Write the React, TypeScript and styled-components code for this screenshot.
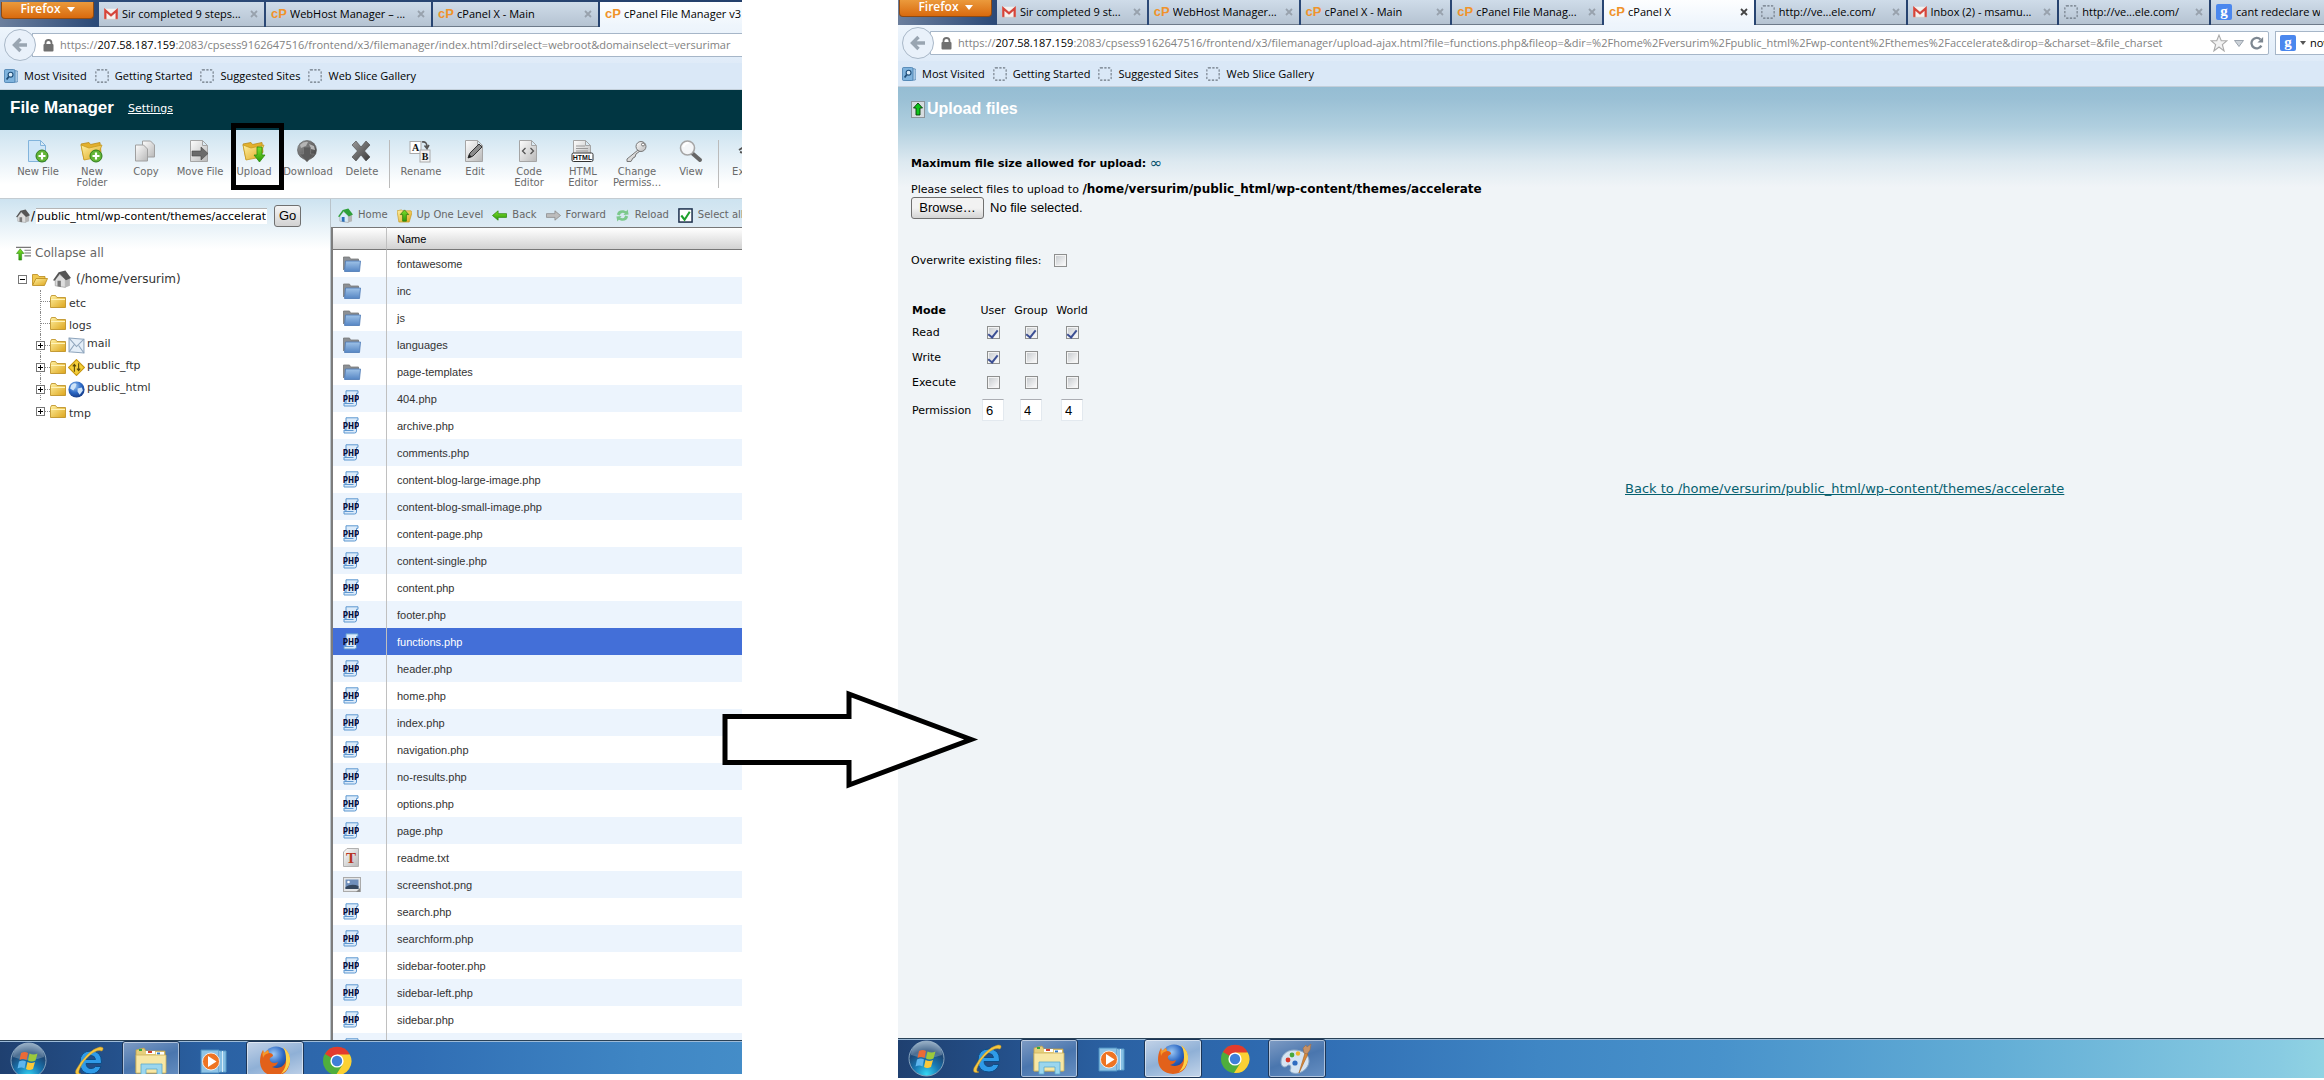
import React, { useRef } from "react";
import styled, { createGlobalStyle, css } from "styled-components";

const ui = `"Open Sans", "Noto Sans", sans-serif`;
const verdana = `"DejaVu Sans", sans-serif`;
const arial = `"Liberation Sans", sans-serif`;

const Global = createGlobalStyle`
  * { box-sizing: border-box; }
  body { margin: 0; background: #fff; font-family: ${verdana}; font-size: 11px; color: #000; }
  button, input { font: inherit; color: inherit; margin: 0; }
  svg { display: block; flex: none; }
`;

/* ---------- page ---------- */

const Page = styled.div`
  position: relative;
  display: grid;
  grid-template-columns: minmax(0, 742fr) minmax(0, 1426fr);
  column-gap: 156px;
  height: 100vh;
  overflow: hidden;
`;

const Window = styled.section<{ $bottom: number }>`
  display: flex;
  flex-direction: column;
  min-width: 0;
  min-height: 0;
  overflow: hidden;
  margin-bottom: ${(p) => p.$bottom}px;
`;

/* ---------- browser chrome ---------- */

const TabStrip = styled.div<{ $top: number }>`
  display: flex;
  flex: none;
  gap: 2px;
  padding-top: ${(p) => p.$top}px;
  background: linear-gradient(90deg, #6c7f9d 0, #2c4a78 96px, #24406c 100%);
`;

const FirefoxButton = styled.button`
  display: flex;
  align-items: center;
  justify-content: center;
  gap: 6px;
  flex: none;
  width: 93px;
  height: 17px;
  margin: 0 3px 8px 1px;
  padding: 0 0 2px;
  border: 1px solid #8f4a12;
  border-top: 0;
  border-radius: 0 0 4px 4px;
  background: linear-gradient(#eb9a3c, #d96a0e);
  color: #fff;
  font: 600 12px/14px ${ui};
`;

const Tab = styled.div<{ $active?: boolean; $size: "fixed" | "even" | "last" }>`
  display: flex;
  align-items: center;
  gap: 4px;
  height: 25px;
  padding: 0 4px 0 5px;
  overflow: hidden;
  font: 11px/16px ${ui};
  white-space: nowrap;
  border-bottom: 1px solid ${(p) => (p.$active ? "#eef5fc" : "#6d7a8a")};
  background: ${(p) => (p.$active ? "linear-gradient(#fdfeff, #eef5fc)" : "linear-gradient(#cfdce9, #b5c3d2)")};
  ${(p) => p.$size === "fixed" && css`flex: 0 0 165px;`}
  ${(p) => p.$size === "even" && css`flex: 1 1 0; min-width: 0;`}
  ${(p) => p.$size === "last" && css`flex: 0 0 113px;`}
`;

const TabTitle = styled.span`
  flex: 1;
  min-width: 0;
  overflow: hidden;
`;

const CloseTab = styled.button<{ $active?: boolean }>`
  flex: none;
  width: 12px;
  height: 12px;
  padding: 2px;
  border: 0;
  background: none;
  color: ${(p) => (p.$active ? "#444" : "#98a2ad")};
`;

const CpMark = styled.b`
  flex: none;
  width: 15px;
  color: #f0932b;
  font: 700 13px/16px ${arial};
`;

const NavBar = styled.div`
  display: flex;
  align-items: center;
  flex: none;
  height: 36px;
  padding: 0 0 0 4px;
  background: linear-gradient(#eef5fc, #dfebf8);
`;

const BackButton = styled.button`
  position: relative;
  flex: none;
  width: 32px;
  height: 32px;
  padding: 7px;
  border: 1px solid #a9b8c8;
  border-radius: 50%;
  background: #e9f1fa;
`;

const UrlBar = styled.div<{ $closed?: boolean }>`
  display: flex;
  align-items: center;
  flex: 1;
  min-width: 0;
  gap: 6px;
  height: 24px;
  margin-left: -4px;
  padding: 0 ${(p) => (p.$closed ? 4 : 0)}px 0 10px;
  border: 1px solid #a6b6c8;
  ${(p) => (p.$closed ? "border-radius: 0 2px 2px 0;" : "border-right: 0;")}
  background: #fff;
`;

const Url = styled.div`
  flex: 1;
  min-width: 0;
  overflow: hidden;
  color: #828282;
  font: 11px/18px ${ui};
  white-space: nowrap;
  b { color: #000; font-weight: 400; }
`;

const SearchBox = styled.div`
  display: flex;
  align-items: center;
  flex: none;
  gap: 4px;
  width: 49px;
  height: 24px;
  margin-left: 6px;
  padding-left: 4px;
  border: 1px solid #a6b6c8;
  border-right: 0;
  background: #fff;
  input {
    width: 16px;
    padding: 0;
    border: 0;
    outline: 0;
    background: none;
    font: 11px/18px ${ui};
  }
`;

const Bookmarks = styled.nav<{ $height: number }>`
  display: flex;
  align-items: center;
  gap: 8px;
  flex: none;
  height: ${(p) => p.$height}px;
  padding-left: 4px;
  border-bottom: 1px solid #c3cfda;
  background: #dae8f7;
  a {
    display: flex;
    align-items: center;
    gap: 6px;
    color: #000;
    text-decoration: none;
    font: 11px/16px ${ui};
    white-space: nowrap;
  }
`;

/* ---------- file manager ---------- */

const ManagerHeader = styled.header`
  display: flex;
  align-items: center;
  flex: none;
  gap: 14px;
  height: 40px;
  padding: 0 10px 4px;
  background: #013642;
  h1 { margin: 0; color: #fff; font: 700 17px/20px ${arial}; }
  a { color: #fff; font-size: 11px; }
`;

const Toolbar = styled.div`
  display: flex;
  flex: none;
  height: 68px;
  padding: 10px 0 0 11px;
  background: linear-gradient(#cde3f0, #fff 80%);
`;

const Divider = styled.span`
  flex: none;
  width: 1px;
  height: 48px;
  background: #bbb;
  &:not(:last-child) { margin-right: 4px; }
`;

const Tool = styled.button`
  position: relative;
  display: flex;
  flex-direction: column;
  align-items: center;
  flex: 0 0 54px;
  width: 54px;
  padding: 0;
  border: 0;
  background: none;
  color: #6a6a6a;
  font: 10px/11px ${verdana};
  svg { margin-bottom: 2px; }
`;

const Marker = styled.span`
  position: absolute;
  top: -17px;
  left: 4px;
  width: 53px;
  height: 67px;
  border: 5px solid #000;
`;

const Body = styled.div`
  display: grid;
  grid-template-columns: 330px minmax(0, 1fr);
  flex: 1;
  min-height: 0;
  border-top: 1px solid #c4ccd2;
  background: linear-gradient(#cde3f0, #fff 50px);
`;

const Side = styled.aside`
  min-width: 0;
`;

const PathForm = styled.form`
  display: flex;
  align-items: center;
  height: 34px;
  padding-left: 16px;
  label { display: flex; align-items: center; gap: 1px; font-size: 12px; }
  input {
    width: 231px;
    height: 16px;
    padding: 0 1px;
    border: 0;
    border-top: 1px solid #b5b5b5;
    background: #fff;
    font: 11px/14px ${verdana};
  }
  button {
    width: 27px;
    height: 22px;
    margin-left: 7px;
    padding: 0;
    border: 1px solid #707070;
    border-radius: 3px;
    background: linear-gradient(#f4f4f4, #d2d2d2);
    font: 13px/16px ${arial};
  }
`;

const CollapseAll = styled.button`
  display: flex;
  align-items: center;
  gap: 4px;
  margin: 12px 0 8px 16px;
  padding: 0;
  height: 16px;
  border: 0;
  background: none;
  color: #666;
  font-size: 12px;
`;

const TreeRoot = styled.div`
  display: flex;
  align-items: center;
  gap: 5px;
  height: 20px;
  padding-left: 18px;
  color: #333;
  font-size: 12px;
`;

const Branch = styled.ul`
  margin: 0 0 0 40px;
  padding: 1px 0 0;
  list-style: none;
`;

const Leaf = styled.li`
  display: flex;
  align-items: center;
  height: 22px;
  border-left: 1px dotted #888;
  &:last-child { border-color: transparent; }
`;

const Stub = styled.span`
  width: 9px;
  border-top: 1px dotted #888;
`;

const ExpandBox = styled.button`
  flex: none;
  width: 9px;
  height: 9px;
  padding: 0;
  border: 1px solid #777;
  background: #fff;
  svg { width: 7px; height: 7px; }
  ${Leaf} & { margin: 0 0 0 -5px; }
  ${Leaf} & + ${Stub} { width: 5px; }
`;

const LeafName = styled.span<{ $badge?: boolean }>`
  display: flex;
  align-items: center;
  color: #333;
  ${(p) => (p.$badge ? "padding: 0 0 4px 2px;" : "padding: 4px 0 0 3px;")}
`;

const BadgeSlot = styled.span`
  margin-left: 2px;
`;

const Listing = styled.div`
  display: flex;
  flex-direction: column;
  min-width: 0;
  min-height: 0;
  overflow: hidden;
  border-left: 1px solid #b9c3ca;
`;

const Actions = styled.div`
  display: flex;
  align-items: center;
  flex: none;
  gap: 9px;
  height: 28px;
  padding: 4px 0 0 7px;
  background: linear-gradient(#cde3f0, #deebf4);
  button, label {
    display: flex;
    align-items: center;
    gap: 5px;
    flex: none;
    padding: 0;
    border: 0;
    background: none;
    color: #666;
    font: 10px/14px ${verdana};
    white-space: nowrap;
  }
`;

const TableClip = styled.div`
  flex: 1;
  min-height: 0;
  overflow: hidden;
  border-left: 2px solid #7d7d7d;
  background: #fff;
`;

const Files = styled.table`
  width: 100%;
  border-collapse: separate;
  border-spacing: 0;
  table-layout: fixed;
  font: 11px/14px ${arial};
  color: #333;
  th {
    height: 23px;
    padding: 0 0 0 10px;
    border-top: 1px solid #777;
    border-bottom: 1px solid #777;
    background: linear-gradient(#fff, #d2d2d2);
    color: #000;
    font-weight: 400;
    text-align: left;
  }
  th:first-child, td:first-child { width: 54px; border-right: 1px solid #c0c0c0; }
  td { height: 27px; padding: 0 0 0 10px; }
`;

const FileRow = styled.tr<{ $selected?: boolean }>`
  &:nth-child(even) { background: #ecf4fd; }
  ${(p) => p.$selected && css`&&, &&:nth-child(even) { background: #436fd8; color: #fff; }`}
`;

/* ---------- upload page ---------- */

const UploadPage = styled.main`
  flex: 1;
  min-height: 0;
  padding: 13px;
  background: linear-gradient(#95bdd3 0, #9ac0d5 12px, #b0cfdf 40px, #dde9f0 75px, #f0f4f7 100px);
`;

const UploadTitle = styled.h1`
  display: flex;
  align-items: center;
  gap: 2px;
  height: 18px;
  margin: 0 0 37px;
  color: #fff;
  font: 700 16px/18px ${arial};
`;

const Line = styled.p`
  margin: 0 0 10px;
  height: 16px;
  line-height: 16px;
`;

const Limit = styled.a`
  color: #05506c;
  font-size: 15px;
  line-height: 16px;
  text-decoration: none;
  vertical-align: -1px;
`;

const TargetPath = styled.b`
  font-size: 12px;
`;

const PickRow = styled.div`
  display: flex;
  align-items: center;
  gap: 6px;
  margin-top: -10px;
  font: 13px/16px ${arial};
  input { display: none; }
  button {
    width: 73px;
    height: 22px;
    padding: 0;
    border: 1px solid #707070;
    border-radius: 3px;
    background: linear-gradient(#f2f2f2 50%, #d4d4d4);
  }
`;

const OverwriteRow = styled.div`
  display: flex;
  align-items: center;
  gap: 12px;
  height: 16px;
  margin: 33px 0 32px;
`;

const Check = styled.input.attrs({ type: "checkbox" })`
  appearance: none;
  display: inline-grid;
  place-items: center;
  width: 13px;
  height: 13px;
  margin: 0;
  border: 1px solid #8e8f8f;
  background: linear-gradient(135deg, #c4c8cc, #fff);
  box-shadow: inset 0 0 0 1px #f4f4f4;
  vertical-align: middle;
  &:checked::before {
    content: "";
    width: 4px;
    height: 8px;
    border: solid #3c4f94;
    border-width: 0 2px 2px 0;
    transform: rotate(38deg);
  }
`;

const Modes = styled.table`
  border-collapse: collapse;
  th, td { height: 25px; padding: 0; font-weight: 400; text-align: center; }
  th { height: 20px; }
  tr > :first-child { width: 66px; padding-left: 1px; text-align: left; }
  thead th:first-child { font-weight: 700; }
  tr > :nth-child(2) { width: 32px; }
  tr > :nth-child(3) { width: 44px; }
  tr > :nth-child(4) { width: 38px; }
  tbody tr:last-child td, tbody tr:last-child th { height: 30px; }
`;

const Digit = styled.input`
  width: 22px;
  height: 22px;
  padding: 0 3px;
  border: 1px solid #e3e9ef;
  border-top-color: #abadb3;
  background: #fff;
  font: 13px/16px ${arial};
`;

const BackLink = styled.a`
  display: block;
  margin: 55px 0 0 51%;
  color: #06606f;
  font-size: 13px;
  line-height: 18px;
  white-space: nowrap;
`;

/* ---------- taskbar ---------- */

const Taskbar = styled.footer<{ $height: number }>`
  display: flex;
  flex: none;
  gap: 4px;
  height: ${(p) => p.$height}px;
  overflow: hidden;
  border-top: 1px solid #2a4258;
  box-shadow: inset 0 1px 0 #9dbbd8;
  background: linear-gradient(90deg, #1f4070 0, #24508a 110px, #2b62a4 220px, #2f6cb3 400px, #3f86c4 640px, #4892cb 820px, #63aed6 1100px, #88cbe2 1380px, #90d3e3 1426px);
`;

const TaskButton = styled.button<{ $state?: "open" | "active"; $start?: boolean }>`
  display: flex;
  align-items: center;
  justify-content: center;
  flex: none;
  width: ${(p) => (p.$start ? 56 : 58)}px;
  height: 39px;
  padding: 0;
  border: 1px solid transparent;
  background: none;
  ${(p) => p.$state && css`
    border-color: #1c3658;
    border-radius: 3px;
    box-shadow: inset 0 0 0 1px rgba(255, 255, 255, 0.5);
    background: ${p.$state === "active"
      ? "linear-gradient(160deg, #c3d3e8, #8fb0d6 50%, #c4d5ea)"
      : "linear-gradient(160deg, #7f9cc4, #4a76ae 50%, #6790c2)"};
  `}
`;

/* ---------- annotation ---------- */

const ArrowLayer = styled.svg`
  position: absolute;
  top: 688px;
  left: calc(31% + 1px);
  pointer-events: none;
`;

/* ---------- drawings ---------- */

const Svg = ({ s = 16, w, h, vb = "0 0 16 16", children }: { s?: number; w?: number; h?: number; vb?: string; children: React.ReactNode }) => (
  <svg width={w ?? s} height={h ?? s} viewBox={vb} fill="none" aria-hidden="true">{children}</svg>
);

const HiddenSvg = styled.svg`
  position: absolute;
`;

const Defs = () => (
  <HiddenSvg width="0" height="0" aria-hidden="true">
    <defs>
      <linearGradient id="gold" x1="0" y1="0" x2="1" y2="1"><stop stopColor="#fff0a0" /><stop offset="1" stopColor="#dda51c" /></linearGradient>
      <linearGradient id="grey" x1="0" y1="0" x2="1" y2="1"><stop stopColor="#fdfdfd" /><stop offset="1" stopColor="#b8b8b8" /></linearGradient>
      <linearGradient id="iron" x1="0" y1="0" x2="1" y2="1"><stop stopColor="#9a9a9a" /><stop offset="1" stopColor="#3a3a3a" /></linearGradient>
      <linearGradient id="green" x1="0" y1="0" x2="0" y2="1"><stop stopColor="#7fe02a" /><stop offset="1" stopColor="#2b9a0c" /></linearGradient>
      <linearGradient id="sky" x1="0" y1="0" x2="0" y2="1"><stop stopColor="#9fc3e8" /><stop offset="1" stopColor="#5686c4" /></linearGradient>
      <radialGradient id="ball" cx=".4" cy=".3" r=".8"><stop stopColor="#9cc8f4" /><stop offset=".5" stopColor="#2c68c4" /><stop offset="1" stopColor="#0e2f78" /></radialGradient>
      <radialGradient id="orb" cx=".5" cy=".95" r=".9"><stop stopColor="#35d8f4" /><stop offset=".4" stopColor="#1879b4" /><stop offset=".75" stopColor="#1c4674" /><stop offset="1" stopColor="#6f8fae" /></radialGradient>
    </defs>
  </HiddenSvg>
);

const Gmail = () => (
  <Svg s={14}><rect x="0" y="2" width="16" height="12" fill="#f4f1ee" /><path d="M1.500 14V4L8 9.500 14.500 4v10" stroke="#d5453a" strokeWidth="2.600" /><path d="M0 14h16" stroke="#c9c2bc" strokeWidth=".6" /></Svg>
);
const Dotted = () => (
  <Svg s={14}><rect x="1" y="1" width="14" height="14" rx="2" stroke="#6b7580" strokeWidth="1.200" strokeDasharray="2.600 1.600" /></Svg>
);
const Google = () => (
  <Svg s={16}><rect width="16" height="16" rx="2" fill="#4a87ee" /><text x="8" y="11.500" fontSize="15" fontWeight="700" textAnchor="middle" fill="#fff" fontFamily="Liberation Serif">g</text></Svg>
);
const Cross = () => <Svg s={8} vb="0 0 8 8"><path d="M1 1l6 6M7 1L1 7" stroke="currentColor" strokeWidth="1.800" /></Svg>;
const BackArrow = () => <Svg s={16}><path d="M15 8H3M8.500 2L2.500 8l6 6" stroke="#99a5b1" strokeWidth="3.400" /></Svg>;
const Lock = () => <Svg w={11} h={13} vb="0 0 11 13"><rect x=".5" y="5" width="10" height="7.500" rx="1" fill="#707070" /><path d="M2.500 6V4a3 3 0 016 0v2" stroke="#707070" strokeWidth="1.800" /></Svg>;
const MostVisited = () => (
  <Svg s={14}><rect x="3" y="2" width="13" height="13" rx="2" fill="#a8c8e4" stroke="#5b8db8" /><rect x=".5" y=".5" width="12" height="15" rx="1.500" fill="#7fb3dd" stroke="#4a80b0" /><circle cx="7.500" cy="6.500" r="2.800" fill="#d9ecfa" stroke="#1e4d78" strokeWidth="1.300" /><path d="M5.500 8.500L3 12" stroke="#1e4d78" strokeWidth="2" /></Svg>
);

const Sheet = ({ fill = "url(#grey)", stroke = "#a5a5a5" }: { fill?: string; stroke?: string }) => (
  <path d="M2.500 .5h12l5 5v16h-17z M14.500 .5v5h5" fill={fill} stroke={stroke} />
);
const FolderBig = () => (
  <g><path d="M1 4l8-1.500 1.500 2L20 2.500l1 10-17 7z" fill="#e3b02c" stroke="#b98a1a" strokeWidth=".8" /><path d="M1 5l3 15 13-2.500L22 5 9 8z" fill="url(#gold)" stroke="#c79a22" strokeWidth=".8" /></g>
);
const Plus = () => <g><circle cx="16" cy="16" r="6" fill="#62b436" stroke="#2f7d1c" /><path d="M16 12.500v7M12.500 16h7" stroke="#fff" strokeWidth="2.200" /></g>;

const toolArt: Record<string, React.ReactNode> = {
  "New File": <><Sheet fill="#cfe6f8" stroke="#82b4dc" /><Plus /></>,
  "New Folder": <><FolderBig /><Plus /></>,
  Copy: <><path d="M8.500 1h8l4 4v12h-12z" fill="url(#grey)" stroke="#a0a0a0" /><path d="M1.500 5h8l4 4v12h-12z" fill="url(#grey)" stroke="#a0a0a0" /></>,
  "Move File": <><Sheet /><path d="M4 11h9V7l7 6.500-7 6.500v-4H4z" fill="#6a6a6a" stroke="#444" strokeWidth=".6" /></>,
  Upload: <><FolderBig /><path d="M15 7h5v8h3l-5.500 7L12 15h3z" fill="url(#green)" stroke="#2c8a10" strokeWidth=".8" /></>,
  Download: <><circle cx="11" cy="10" r="9.500" fill="url(#iron)" stroke="#555" strokeWidth=".6" /><path d="M4 5q4-4 8-3l-2 4-5 2zM13 4l5 2 1 4-4-1z" fill="#b5b5b5" /><path d="M7.500 7h7v7h4L11 22l-7.500-8h4z" fill="#5c5c5c" stroke="#8a8a8a" strokeWidth=".5" /></>,
  Delete: <path d="M2 5l4-4 5 6 5-6 4 4-5.500 6 5.500 6-4 4-5-6-5 6-4-4 5.500-6z" fill="url(#iron)" stroke="#444" strokeWidth=".6" />,
  Rename: <><rect x="1" y="1.500" width="11" height="12" fill="#fff" stroke="#aaa" /><rect x="11" y="10" width="10" height="12" fill="#f2f2f2" stroke="#aaa" /><text x="6.500" y="11" fontSize="10" fontWeight="700" textAnchor="middle" fill="#111" fontFamily="Liberation Serif">A</text><text x="16" y="20" fontSize="10" fontWeight="700" textAnchor="middle" fill="#111" fontFamily="Liberation Serif">B</text><path d="M13 2q5-1 5 5M15.500 5.500l2.500 3 2-3.500" stroke="#555" strokeWidth="1.600" /></>,
  Edit: <><Sheet /><path d="M5 18l2-5 9-9 3 3-9 9z" fill="#8b8b8b" stroke="#333" /><path d="M5 18l4-1-3-3z" fill="#222" /></>,
  "Code Editor": <><Sheet /><path d="M8.500 8L5.500 11l3 3M13.500 8l3 3-3 3" stroke="#555" strokeWidth="1.300" /></>,
  "HTML Editor": <><Sheet /><path d="M5 6h9M5 8.500h12M5 11h12" stroke="#999" /><rect x="1" y="13" width="21" height="8.500" rx="1.500" fill="#fff" stroke="#333" /><text x="11.500" y="20" fontSize="7" fontWeight="700" textAnchor="middle" fill="#111" fontFamily="Liberation Sans">HTML</text></>,
  "Change Permiss...": <><path d="M13 10L2 19v2.500h4L8 18l2-1 1-3 4-3z" fill="url(#grey)" stroke="#777" /><circle cx="16" cy="6.500" r="5" fill="url(#grey)" stroke="#777" /><circle cx="18" cy="4.500" r="1.500" fill="#fff" stroke="#777" /></>,
  View: <><path d="M13 13l8 7" stroke="#666" strokeWidth="4" strokeLinecap="round" /><circle cx="8.500" cy="8" r="7" fill="#f4f6f8" stroke="#a5a5a5" strokeWidth="1.600" /><path d="M4.500 7q1-4 5-4" stroke="#fff" strokeWidth="2" /></>,
  Extract: <path d="M6 7l-5 3M6 13l-4-1" stroke="#555" strokeWidth="2" />,
};

const Folder = () => (
  <Svg w={16} h={13} vb="0 0 16 13"><path d="M.5 2.500l1-2h4l1.500 2h8.500v10H.5z" fill="url(#gold)" stroke="#b98a1a" strokeWidth=".8" /><path d="M1 4.500h14" stroke="#fff3b8" /></Svg>
);
const FolderOpen = () => (
  <Svg w={16} h={13} vb="0 0 16 13"><path d="M.5 12V1.500h5l1.500 2h6V6" fill="#f0c850" stroke="#b98a1a" strokeWidth=".8" /><path d="M.5 12.500L4 5.500h11.500l-3 7z" fill="url(#gold)" stroke="#b98a1a" strokeWidth=".8" /></Svg>
);
const House = ({ s = 16, roof = "#555", wall = "#ddd", door = "#777" }) => (
  <Svg s={s}><path d="M2 8l4-4 5 4v7.500L2 14z" fill={wall} stroke="#999" strokeWidth=".6" /><path d="M11 8l4-1v7l-4 1.500z" fill="#b5b5b5" /><path d="M0 9l5-7 6-1.500L16 7l-4.500 2L6 3.500 1.500 9.500z" fill={roof} /><path d="M4 9.500h3V15l-3-.5z" fill={door} /></Svg>
);
const BlueFolder = () => (
  <Svg w={18} h={16} vb="0 0 18 16"><path d="M.5 14V1h6l1 2h8v4" fill="#8b8f94" stroke="#777" strokeWidth=".8" /><path d="M1.500 15.500L2.500 5h15l-1 10.500z" fill="url(#sky)" stroke="#4a77b4" strokeWidth=".8" /></Svg>
);
const Php = () => (
  <Svg w={16} h={17} vb="0 0 16 17"><path d="M3 .8h12v2.500h-1.500V14q0 2-2 2H1v-3h2z" fill="#dcebfa" stroke="#5d97d0" /><path d="M1.500 13.500h9" stroke="#5d97d0" /><text x="8" y="11.500" fontSize="8" fontWeight="700" textAnchor="middle" fill="#070f3c" fontFamily="DejaVu Sans Condensed, Liberation Sans">PHP</text></Svg>
);
const Txt = () => (
  <Svg w={16} h={19} vb="0 0 16 19"><path d="M4 .5h11.500v18H.5V4z" fill="url(#grey)" stroke="#b0b0b0" /><text x="8" y="15" fontSize="15" fontWeight="700" textAnchor="middle" fill="#b8331f" fontFamily="Liberation Serif">T</text></Svg>
);
const Png = () => (
  <Svg w={18} h={16} vb="0 0 18 16"><rect x=".5" y=".5" width="17" height="14" fill="#e4e6e8" stroke="#aaa" /><rect x="2.500" y="2.500" width="13" height="9.500" fill="#6f8fbc" /><path d="M2.500 10q6-4 13-1v3h-13z" fill="#34475f" /><circle cx="5.500" cy="5" r="1.300" fill="#fff" /><path d="M13 15l4-4v4z" fill="#888" /></Svg>
);
const Arrow = ({ flip, fill = "url(#green)", stroke = "#2f8a12" }: { flip?: boolean; fill?: string; stroke?: string }) => (
  <Svg s={15}><path d={flip ? "M15.500 8l-6-5v3H.5v4h9v3z" : "M.5 8l6-5v3h9v4h-9v3z"} fill={fill} stroke={stroke} strokeWidth=".8" /></Svg>
);
const Tick = () => <Svg s={15}><rect x="1" y="1" width="14" height="14" fill="#fff" stroke="#1c2f4c" strokeWidth="1.600" /><path d="M3.500 8l3.500 4.500L12.500 4" stroke="#1da02c" strokeWidth="2.200" /></Svg>;
const Reload = () => <Svg s={15}><path d="M2 7q1-5 7-4.500l3 1 1.500-2 1 5.500-5.500.5 1.500-2Q6 4 5 8zM14 9q-1 5-7 4.500l-3-1-1.500 2-1-5.500 5.500-.5-1.500 2Q10 12 11 8z" fill="#7cc98c" /></Svg>;
const UpLevel = () => <Svg s={15}><path d="M0 3l5-1 1 1h9l1 2-3 10H2z" fill="url(#gold)" stroke="#c79a22" strokeWidth=".7" /><path d="M8 2l4.500 5H10v7H6V7H3.500z" fill="url(#green)" stroke="#2b7a0c" strokeWidth=".8" /></Svg>;
const CollapseIcon = () => <Svg s={15}><path d="M4.500 3l4 5H6v7H3V8H.5z" fill="url(#green)" stroke="#2b8a0c" strokeWidth=".6" /><path d="M0 1.500h16M9 4.500h7M9 7.500h7M9 10.500h7" stroke="#777" strokeWidth="1.200" /></Svg>;
const Sign = ({ plus }: { plus?: boolean }) => <Svg s={7} vb="0 0 7 7"><path d={plus ? "M1 3.500h5M3.500 1v5" : "M1 3.500h5"} stroke="#000" /></Svg>;

const badges: Record<string, React.ReactNode> = {
  mail: <Svg s={17}><path d="M1 1l14 1v13L1 14z" fill="#e4eef8" stroke="#8fa5bc" /><path d="M1 1l7 8 7-7M1 14l5-7M15 15l-5-7" stroke="#8fa5bc" /></Svg>,
  public_ftp: <Svg s={17}><path d="M8 .5L15.500 8 8 15.500.5 8z" fill="#f5cf3a" stroke="#c79612" /><path d="M6 12V5M4.500 7L6 5l1.500 2M10 4v7M8.500 9l1.500 2 1.500-2" stroke="#5a4708" strokeWidth="1" /></Svg>,
  public_html: <Svg s={17}><circle cx="8" cy="8" r="7.600" fill="url(#ball)" /><path d="M3 4q3-3 5-1L7 6 5 9 2 7zM9 7l4-1 1 3-3 4-2-3z" fill="#cfe4f8" /></Svg>,
};

const Windows = () => (
  <Svg s={37} vb="0 0 37 37"><circle cx="18.500" cy="18.500" r="17.500" fill="url(#orb)" stroke="#86a3bd" /><path d="M3 15a15.500 14 0 0131 0q-15 6-31 0z" fill="#fff" opacity=".22" /><path d="M11 11q4-2 7 0l-1.500 7q-3-2-7 0z" fill="#ec6a36" /><path d="M19.500 11.500q4 2 8 0l-2 7q-4 2-7.500 0z" fill="#9cc93c" /><path d="M9 19.500q4-2 7 0l-1.500 7q-3-2-7 0z" fill="#5fb6ee" /><path d="M17.500 20q4 2 7.500 0l-2 7q-4 2-7 0z" fill="#fbc93a" /></Svg>
);
const Explorer = () => (
  <Svg s={32} vb="0 0 32 32"><path d="M1 5l8-2 2 3h19v22H1z" fill="#e6cf7c" stroke="#bfa04a" strokeWidth=".8" /><path d="M11 6h9v3h-9zM21 7h8v3h-8z" fill="#fff" /><path d="M4 4h3v2H4z" fill="#35a83a" /><path d="M13 6h4v2h-4z" fill="#d2402c" /><path d="M22 7.500h3v2h-3z" fill="#2f7ac8" /><path d="M1 10h30v18H1z" fill="#f7e7a5" stroke="#cdb25c" strokeWidth=".8" /><path d="M6 31V19h21v12h-5v-7H11v7z" fill="#9bd6ee" stroke="#5aa9cc" strokeWidth=".8" /></Svg>
);
const IE = () => (
  <Svg s={32} vb="0 0 32 32"><path d="M28 18.500H13q.5 5 5 5 3 0 4.500-2H28Q25 29 18 29 7 29 7 17.500T18 6q10.500 0 10.500 11zM13 14.500h9.500q-.5-4-4.700-4T13 14.500z" fill="#2f9be8" stroke="#0d4d86" strokeWidth="1" /><path d="M29 6q3-4-2-4-6 1-13 8T3 25q-2 6 5 4-4 0-1-6 3-7 10-13t12-4z" fill="#f5c742" stroke="#c9951c" strokeWidth=".5" /></Svg>
);
const Media = () => (
  <Svg s={28} vb="0 0 28 28"><path d="M18 4h9v21h-9z" fill="#86bfe4" stroke="#5a9cc8" /><path d="M20.500 4v21M23.500 4v21" stroke="#d6ecf8" /><path d="M2 3h18v23H2z" fill="#8fc4e6" stroke="#4d8fc0" /><circle cx="12" cy="14.500" r="8.500" fill="#ee7423" stroke="#fff" strokeWidth=".8" /><path d="M9 9l8.500 5.500L9 20z" fill="#fff" /></Svg>
);
const Firefox = () => (
  <Svg s={32} vb="0 0 32 32"><circle cx="17" cy="14" r="12.500" fill="url(#ball)" /><path d="M25 3q6 5 6 13-1 14-15 15Q2 30 1 17 1 10 4 5l1 3 4-3 1 3q4 0 4 3l-3 2q-1 2 1 4 3 2 7 0-1 4-6 5 9 3 13-4 3-7-1-15z" fill="#e2611a" /><path d="M24 2q8 6 7 15-2 9-9 12 6-7 5-15 0-7-3-12z" fill="#fbd24a" /><path d="M4 5l1 3 4-3 1 3q-5 1-6 5-1-4 0-8z" fill="#f59a2c" /></Svg>
);
const Chrome = () => (
  <Svg s={30} vb="0 0 30 30"><circle cx="15" cy="15" r="14" fill="#4fae3c" /><path d="M15 15L3 8a14 14 0 0124.500 0z" fill="#e23b2e" /><path d="M15 15V8.500h12.800A14 14 0 0114 29l7-11z" fill="#fbd134" /><circle cx="15" cy="15" r="6.600" fill="#fff" /><circle cx="15" cy="15" r="5.200" fill="#3f7fd8" /></Svg>
);
const Paint = () => (
  <Svg s={34} vb="0 0 34 34"><path d="M14 8C6 8 1 14 1 20c0 5 4 6 6 4 3-3 5 1 3 4 0 3 5 4 9 3 6-2 10-7 10-12 0-7-7-11-15-11z" fill="#d5e4f2" stroke="#8fabc6" /><circle cx="8" cy="18" r="2.400" fill="#d8392c" /><circle cx="12" cy="13" r="2.400" fill="#48a83c" /><circle cx="18" cy="11.500" r="2.200" fill="#f2b52c" /><circle cx="15" cy="21" r="2.600" fill="#2f6cc0" /><path d="M19 31l6-20 3 1z" fill="#d98a3a" stroke="#a5601c" strokeWidth=".6" /><path d="M24 11l-1-5 3-3 1 2 4-3-1 6-3 4z" fill="#c79266" stroke="#9a6a42" strokeWidth=".5" /></Svg>
);

/* ---------- data ---------- */

type TabInfo = { icon: React.ReactNode; title: string; active?: boolean };
const cp = <CpMark>cP</CpMark>;

const leftTabs: TabInfo[] = [
  { icon: <Gmail />, title: "Sir completed 9 steps..." },
  { icon: cp, title: "WebHost Manager – ..." },
  { icon: cp, title: "cPanel X - Main" },
  { icon: cp, title: "cPanel File Manager v3", active: true },
];
const rightTabs: TabInfo[] = [
  { icon: <Gmail />, title: "Sir completed 9 st..." },
  { icon: cp, title: "WebHost Manager..." },
  { icon: cp, title: "cPanel X - Main" },
  { icon: cp, title: "cPanel File Manag..." },
  { icon: cp, title: "cPanel X", active: true },
  { icon: <Dotted />, title: "http://ve...ele.com/" },
  { icon: <Gmail />, title: "Inbox (2) - msamu..." },
  { icon: <Dotted />, title: "http://ve...ele.com/" },
  { icon: <Google />, title: "cant redeclare wi" },
];
const tools = ["New File", "New Folder", "Copy", "Move File", "Upload", "Download", "Delete", "|", "Rename", "Edit", "Code Editor", "HTML Editor", "Change Permiss...", "View", "|", "Extract"];
const leaves = ["etc", "logs", "mail", "public_ftp", "public_html", "tmp"];
const files = [
  "fontawesome", "inc", "js", "languages", "page-templates", "404.php", "archive.php", "comments.php",
  "content-blog-large-image.php", "content-blog-small-image.php", "content-page.php", "content-single.php",
  "content.php", "footer.php", "functions.php", "header.php", "home.php", "index.php", "navigation.php",
  "no-results.php", "options.php", "page.php", "readme.txt", "screenshot.png", "search.php",
  "searchform.php", "sidebar-footer.php", "sidebar-left.php", "sidebar.php", "single.php",
];
const fileIcon = (name: string) =>
  name.endsWith(".php") ? <Php /> : name.endsWith(".txt") ? <Txt /> : name.endsWith(".png") ? <Png /> : <BlueFolder />;

/* ---------- parts ---------- */

const Chromebar = ({ tabs, url, wide }: { tabs: TabInfo[]; url: string; wide?: boolean }) => (
  <>
    <TabStrip $top={wide ? 0 : 2}>
      <FirefoxButton>Firefox <Svg w={8} h={5} vb="0 0 8 5"><path d="M0 0h8L4 5z" fill="#fff" /></Svg></FirefoxButton>
      {tabs.map((t, i) => {
        const last = i === tabs.length - 1;
        return (
          <Tab key={i} $active={t.active} $size={wide ? (last ? "last" : "even") : "fixed"}>
            {t.icon}
            <TabTitle>{t.title}</TabTitle>
            {!last && <CloseTab $active={t.active} aria-label="Close tab"><Cross /></CloseTab>}
          </Tab>
        );
      })}
    </TabStrip>
    <NavBar>
      <BackButton aria-label="Back"><BackArrow /></BackButton>
      <UrlBar $closed={wide}>
        <Lock />
        <Url role="textbox" aria-label="Address" tabIndex={0}>
          https://<b>207.58.187.159</b>:2083/cpsess9162647516/frontend/x3/filemanager/{url}
        </Url>
        {wide && (
          <>
            <Svg s={18}><path d="M8 1l2 5h5l-4 3.500L12.500 15 8 11.500 3.500 15 5 9.500 1 6h5z" fill="#f2f2f2" stroke="#aaa" /></Svg>
            <Svg w={10} h={7} vb="0 0 10 7"><path d="M.5.5h9L5 6.500z" fill="#ccd2d8" stroke="#9aa3ad" /></Svg>
            <Svg s={14}><path d="M13 11a6 6 0 11-1-7" stroke="#7d8791" strokeWidth="2.600" /><path d="M15 1v6.500H8.500z" fill="#7d8791" /></Svg>
          </>
        )}
      </UrlBar>
      {wide && (
        <SearchBox>
          <Google />
          <Svg w={6} h={4} vb="0 0 6 4"><path d="M0 0h6L3 4z" fill="#555" /></Svg>
          <input aria-label="Search" defaultValue="now" />
        </SearchBox>
      )}
    </NavBar>
    <Bookmarks $height={wide ? 26 : 27}>
      <a href="#most"><MostVisited />Most Visited</a>
      <a href="#start"><Dotted />Getting Started</a>
      <a href="#sites"><Dotted />Suggested Sites</a>
      <a href="#slices"><Dotted />Web Slice Gallery</a>
    </Bookmarks>
  </>
);

const Tasks = ({ height, paint }: { height: number; paint?: boolean }) => (
  <Taskbar $height={height}>
    <TaskButton $start aria-label="Start"><Windows /></TaskButton>
    <TaskButton aria-label="Internet Explorer"><IE /></TaskButton>
    <TaskButton $state="open" aria-label="Explorer"><Explorer /></TaskButton>
    <TaskButton aria-label="Media Player"><Media /></TaskButton>
    <TaskButton $state="active" aria-label="Firefox"><Firefox /></TaskButton>
    <TaskButton aria-label="Chrome"><Chrome /></TaskButton>
    {paint && <TaskButton $state="open" aria-label="Paint"><Paint /></TaskButton>}
  </Taskbar>
);

const FileManager = () => (
  <Window $bottom={6}>
    <Chromebar tabs={leftTabs} url="index.html?dirselect=webroot&domainselect=versurimar" />
    <ManagerHeader><h1>File Manager</h1><a href="#settings">Settings</a></ManagerHeader>
    <Toolbar>
      {tools.map((t, i) =>
        t === "|" ? <Divider key={i} /> : (
          <Tool key={i}>
            <Svg s={24} vb="0 0 24 24">{toolArt[t]}</Svg>
            {t}
            {t === "Upload" && <Marker />}
          </Tool>
        ),
      )}
    </Toolbar>
    <Body>
      <Side>
        <PathForm onSubmit={(e) => e.preventDefault()}>
          <label><House s={14} />/<input aria-label="Path" defaultValue="public_html/wp-content/themes/accelerate" /></label>
          <button type="submit">Go</button>
        </PathForm>
        <CollapseAll><CollapseIcon />Collapse all</CollapseAll>
        <TreeRoot><ExpandBox aria-label="Collapse"><Sign /></ExpandBox><FolderOpen /><House s={18} />(/home/versurim)</TreeRoot>
        <Branch>
          {leaves.map((name, i) => (
            <Leaf key={name}>
              {i > 1 && <ExpandBox aria-label={`Expand ${name}`}><Sign plus /></ExpandBox>}
              <Stub />
              <Folder />
              {badges[name] && <BadgeSlot>{badges[name]}</BadgeSlot>}
              <LeafName $badge={!!badges[name]}>{name}</LeafName>
            </Leaf>
          ))}
        </Branch>
      </Side>
      <Listing>
        <Actions>
          <button><House s={15} roof="#2fa03a" wall="#d8ebf8" door="#2c6fb8" />Home</button>
          <button><UpLevel />Up One Level</button>
          <button><Arrow />Back</button>
          <button><Arrow flip fill="#bdbdbd" stroke="#888" />Forward</button>
          <button><Reload />Reload</button>
          <button><Tick />Select all</button>
        </Actions>
        <TableClip>
          <Files>
            <thead><tr><th aria-label="Type" /><th>Name</th></tr></thead>
            <tbody>
              {files.map((f) => (
                <FileRow key={f} $selected={f === "functions.php"}><td>{fileIcon(f)}</td><td>{f}</td></FileRow>
              ))}
            </tbody>
          </Files>
        </TableClip>
      </Listing>
    </Body>
    <Tasks height={34} />
  </Window>
);

const modes: [string, boolean[]][] = [
  ["Read", [true, true, true]],
  ["Write", [true, false, false]],
  ["Execute", [false, false, false]],
];
const groups = ["User", "Group", "World"];

const Upload = () => {
  const picker = useRef<HTMLInputElement>(null);
  return (
    <Window $bottom={2}>
      <Chromebar wide tabs={rightTabs} url="upload-ajax.html?file=functions.php&fileop=&dir=%2Fhome%2Fversurim%2Fpublic_html%2Fwp-content%2Fthemes%2Faccelerate&dirop=&charset=&file_charset" />
      <UploadPage>
        <UploadTitle>
          <Svg w={14} h={17} vb="0 0 14 17"><rect x=".5" y=".5" width="13" height="16" fill="#d6dce0" stroke="#8c9499" /><path d="M7 2l4.500 5H9v7H5V7H2.500z" fill="#0fc31a" stroke="#063f08" strokeWidth=".9" /></Svg>
          Upload files
        </UploadTitle>
        <Line><b>Maximum file size allowed for upload:</b> <Limit href="#limit">∞</Limit></Line>
        <Line>Please select files to upload to <TargetPath>/home/versurim/public_html/wp-content/themes/accelerate</TargetPath></Line>
        <PickRow>
          <input ref={picker} type="file" aria-label="File" />
          <button onClick={() => picker.current?.click()}>Browse…</button>
          No file selected.
        </PickRow>
        <OverwriteRow><label htmlFor="overwrite">Overwrite existing files:</label><Check id="overwrite" /></OverwriteRow>
        <Modes>
          <thead><tr><th>Mode</th>{groups.map((g) => <th key={g}>{g}</th>)}</tr></thead>
          <tbody>
            {modes.map(([name, on]) => (
              <tr key={name}>
                <th scope="row">{name}</th>
                {on.map((v, i) => <td key={i}><Check defaultChecked={v} aria-label={`${name} ${groups[i]}`} /></td>)}
              </tr>
            ))}
            <tr>
              <th scope="row">Permission</th>
              {["6", "4", "4"].map((v, i) => <td key={i}><Digit defaultValue={v} aria-label={`Permission ${groups[i]}`} /></td>)}
            </tr>
          </tbody>
        </Modes>
        <BackLink href="#back">Back to /home/versurim/public_html/wp-content/themes/accelerate</BackLink>
      </UploadPage>
      <Tasks height={40} paint />
    </Window>
  );
};

export default function App() {
  return (
    <>
      <Global />
      <Defs />
      <Page>
        <FileManager />
        <Upload />
        <ArrowLayer width="260" height="104" viewBox="0 0 260 104" aria-hidden="true">
          <path d="M4 28.500H128V6L250 51.500 128 97V74.500H4z" fill="#fff" stroke="#000" strokeWidth="5" />
        </ArrowLayer>
      </Page>
    </>
  );
}
